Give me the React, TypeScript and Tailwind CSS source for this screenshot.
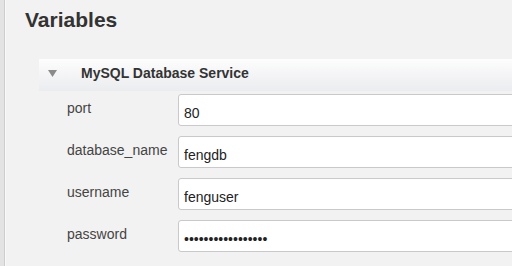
import React from "react";

const fields = [
  { name: "port", value: "80", type: "text" },
  { name: "database_name", value: "fengdb", type: "text" },
  { name: "username", value: "fenguser", type: "text" },
  { name: "password", value: "secretpassword123", type: "password" },
];

function VariableRow({ name, value, type }: { name: string; value: string; type: string }) {
  return (
    <div className="flex items-start">
      <label className="w-[111px] shrink-0 pt-1 text-[14px] leading-5 text-[#444]">{name}</label>
      <input
        type={type}
        value={value}
        readOnly
        className="h-[32px] w-[400px] shrink-0 rounded-[3px] border border-[#c9c9c9] bg-white pl-[5px] pt-[5px] pb-0 text-[14px] text-[#222] outline-none"
      />
    </div>
  );
}

export default function App() {
  return (
    <div
      className="flex h-[266px] w-[512px] overflow-hidden bg-[#f2f2f2]"
      style={{ fontFamily: '"Liberation Sans", Arial, Helvetica, sans-serif' }}
    >
      <div className="w-[4px] shrink-0 bg-[#e3e3e3]" />
      <div className="w-[1px] shrink-0 bg-[#cdcdcd]" />
      <div className="w-[1px] shrink-0 bg-[#f9f9f9]" />

      <div className="min-w-0 flex-1">
        <h1 className="ml-[19px] mt-2 text-[21px] font-bold leading-6 text-[#333]">Variables</h1>

        <section className="ml-[33px] mt-[27px]">
          <div className="flex h-[32px] w-[500px] items-start bg-gradient-to-b from-[#fdfdfd] to-[#ebecef]">
            <svg className="ml-[9px] mt-[11px] h-[7px] w-[9px]" viewBox="0 0 9 7">
              <path d="M0 0 H9 L4.5 7 Z" fill="#8a8a8a" />
            </svg>
            <span className="ml-[24px] text-[14px] font-bold leading-[28px] text-[#333]">MySQL Database Service</span>
          </div>

          <div className="mt-[3px] flex flex-col gap-[10px] pl-[28px]">
            {fields.map((f) => (
              <VariableRow key={f.name} {...f} />
            ))}
          </div>
        </section>
      </div>
    </div>
  );
}
